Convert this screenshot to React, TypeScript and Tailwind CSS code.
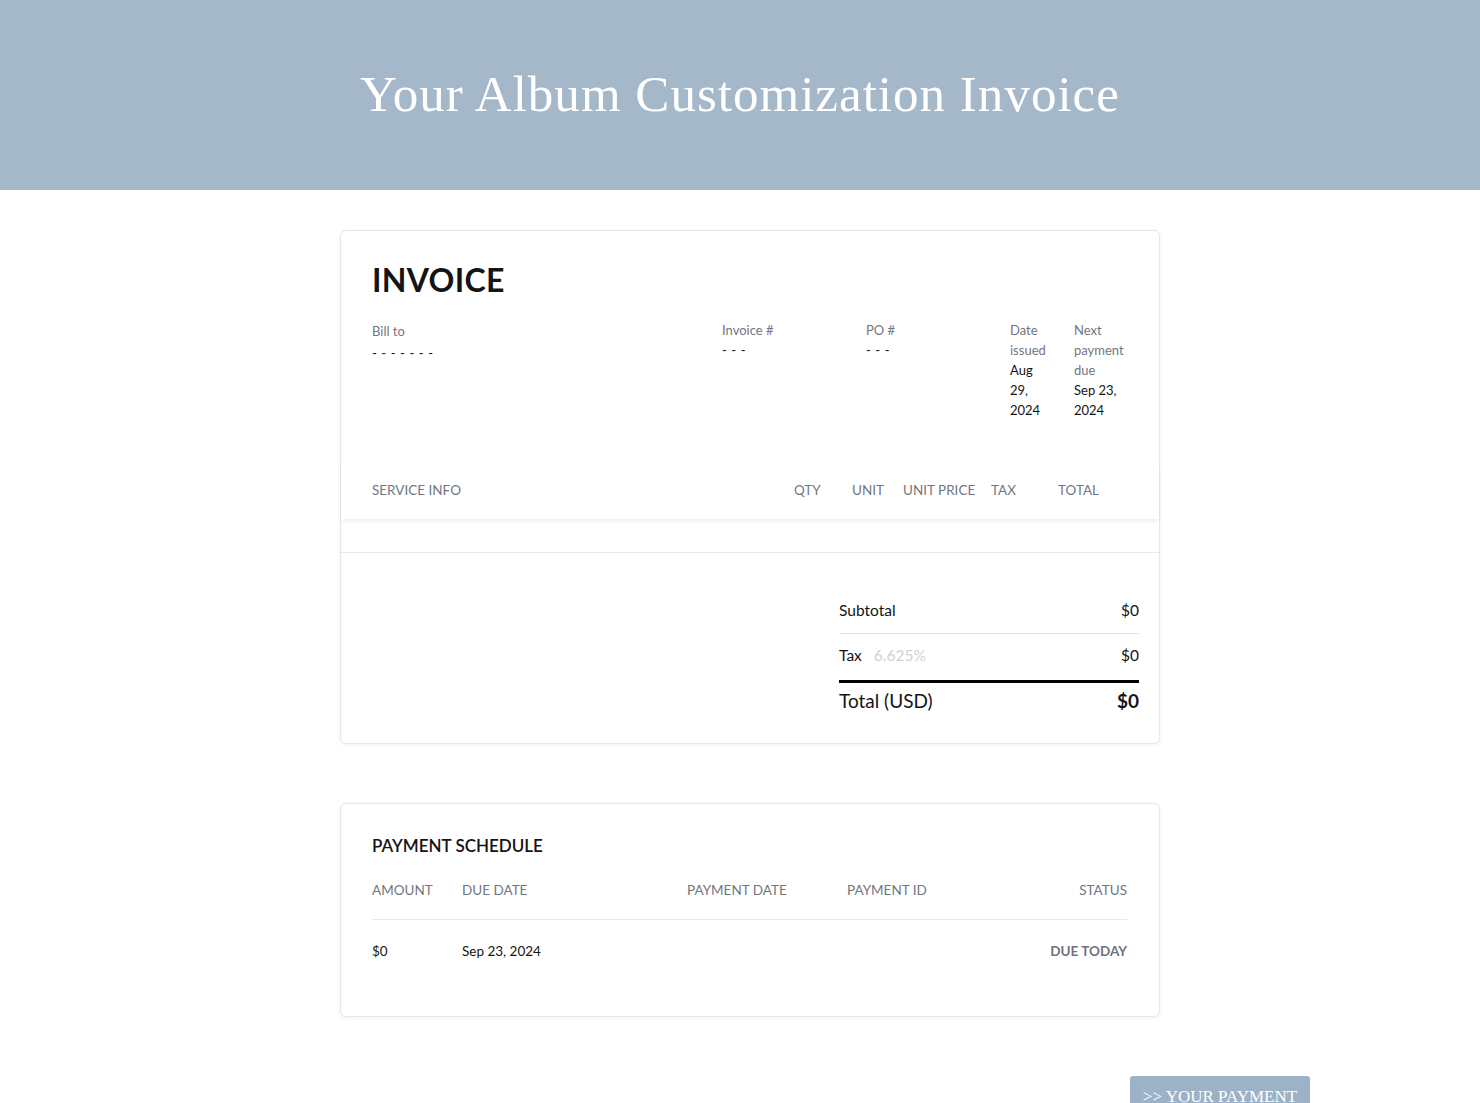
const sans = "font-['Lato','Open_Sans',sans-serif]";
const serif = "font-['Liberation_Serif','DejaVu_Serif',serif]";

function InvoiceCard() {
  return (
    <section className="rounded-md border border-[#e6e7ea] bg-white shadow-[0_1px_4px_rgba(0,0,0,0.06)]">
      <div className="pl-[31px] pr-[32px] pt-[29px]">
        <h2 className="text-[32px] font-bold leading-[40px] tracking-[0.01em] text-[#141414]">INVOICE</h2>
        <div className="mt-[21px] flex text-[13px] leading-5">
          <div className="flex-1">
            <div className="text-[#73767f]">Bill to</div>
            <div className="mt-[2px] tracking-[0.6px] text-[#141414]">- - - - - - -</div>
          </div>
          <div className="w-[144px]">
            <div className="-mt-px text-[#73767f]">Invoice #</div>
            <div className="tracking-[0.6px] text-[#141414]">- - -</div>
          </div>
          <div className="w-[144px]">
            <div className="-mt-px text-[#73767f]">PO #</div>
            <div className="tracking-[0.6px] text-[#141414]">- - -</div>
          </div>
          <div className="w-[64px] pr-[22px]">
            <div className="-mt-px text-[#73767f]">Date issued</div>
            <div className="text-[#141414]">Aug 29, 2024</div>
          </div>
          <div className="w-[53px]">
            <div className="-mt-px text-[#73767f]">Next payment due</div>
            <div className="text-[#141414]">Sep 23, 2024</div>
          </div>
        </div>
      </div>
      <div className="mt-[42px] flex h-[57px] items-center pl-[31px] pr-[32px] text-[13.5px] uppercase text-[#73767f] shadow-[0_3px_5px_-1px_rgba(0,0,0,0.08)]">
        <div className="flex-1">Service info</div>
        <div className="w-[58px]">Qty</div>
        <div className="w-[51px]">Unit</div>
        <div className="w-[88px]">Unit price</div>
        <div className="w-[67px]">Tax</div>
        <div className="w-[69px]">Total</div>
      </div>
      <div className="h-[34px] border-b border-[#e6e7ea]" />
      <div className="flex justify-end pb-[28px] pr-5 pt-[46px]">
        <div className="w-[300px] text-[15.5px] text-[#141414]">
          <div className="flex justify-between border-b border-[#e3e4e7] pb-[11px]">
            <span>Subtotal</span>
            <span>$0</span>
          </div>
          <div className="flex justify-between border-b-[3px] border-black pb-[12px] pt-[10px]">
            <span>
              Tax <span className="ml-2 text-[#cfd1d6]">6.625%</span>
            </span>
            <span>$0</span>
          </div>
          <div className="flex justify-between pt-[4px] text-[19px]">
            <span>Total (USD)</span>
            <span className="font-bold">$0</span>
          </div>
        </div>
      </div>
    </section>
  );
}

function ScheduleCard() {
  return (
    <section className="mt-[59px] rounded-md border border-[#e6e7ea] bg-white pb-[54px] pl-[31px] pr-[32px] pt-[30px] shadow-[0_1px_4px_rgba(0,0,0,0.06)]">
      <h3 className="text-[17px] font-semibold leading-6 text-[#141414]">PAYMENT SCHEDULE</h3>
      <div className="mt-[22px] flex border-b border-[#e6e7ea] pb-[19px] text-[13.5px] uppercase text-[#73767f]">
        <div className="w-[90px]">Amount</div>
        <div className="w-[225px]">Due date</div>
        <div className="w-[160px]">Payment date</div>
        <div className="flex-1">Payment ID</div>
        <div>Status</div>
      </div>
      <div className="flex pt-[21px] text-[13.5px] text-[#141414]">
        <div className="w-[90px]">$0</div>
        <div className="w-[225px]">Sep 23, 2024</div>
        <div className="w-[160px]" />
        <div className="flex-1" />
        <div className="font-bold uppercase text-[#6f727b]">Due today</div>
      </div>
    </section>
  );
}

export default function App() {
  return (
    <div className={`${sans} min-h-screen bg-white`}>
      <header className="flex h-[190px] justify-center bg-[#a4b8ca] pt-[66px]">
        <h1 className={`${serif} text-[51px] leading-[56px] tracking-[0.02em] text-white`}>
          Your Album Customization Invoice
        </h1>
      </header>
      <main className="ml-[340px] mt-10 w-[820px]">
        <InvoiceCard />
        <ScheduleCard />
      </main>
      <div className="flex justify-end pr-[170px] pt-[59px]">
        <button className={`${serif} h-[40px] w-[180px] rounded-t-[3px] bg-[#9db2c6] pt-[2px] text-[17px] leading-6 text-white`}>
          &gt;&gt; YOUR PAYMENT
        </button>
      </div>
    </div>
  );
}
